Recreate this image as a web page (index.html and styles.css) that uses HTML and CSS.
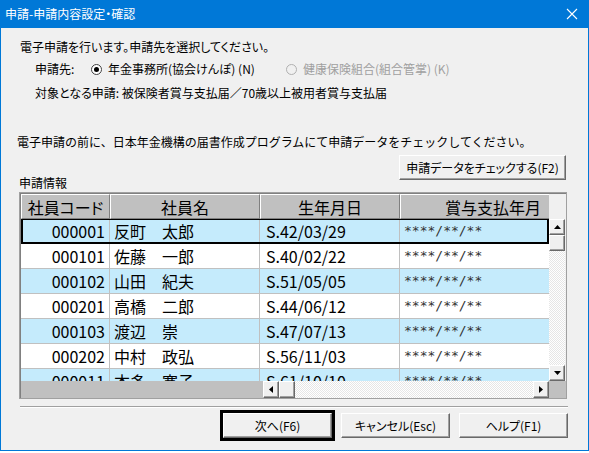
FILE: index.html
```html
<!DOCTYPE html>
<html lang="ja">

<head>
    <meta charset="UTF-8">
    <meta name="viewport" content="width=device-width, initial-scale=1.0">
    <title>申請-申請内容設定・確認</title>
    <link rel="stylesheet" href="styles.css">
</head>

<body>
    <div class="window">
        <div class="titlebar">
            <span class="title">申請-申請内容設定・確認</span>
            <svg class="close" width="12" height="12" viewBox="0 0 12 12">
                <path d="M1 1 L11 11 M11 1 L1 11" stroke="#fff" stroke-width="1.1" />
            </svg>
        </div>

        <div class="content">
            <p class="intro">電子申請を行います。申請先を選択してください。</p>

            <div class="dest-row">
                <span class="dest-label">申請先:</span>
                <label class="radio-opt first">
                    <span class="radio checked"></span>
                    <span>年金事務所(協会けんぽ) (N)</span>
                </label>
                <label class="radio-opt disabled">
                    <span class="radio"></span>
                    <span>健康保険組合(組合管掌) (K)</span>
                </label>
            </div>

            <p class="target">対象となる申請: 被保険者賞与支払届／70歳以上被用者賞与支払届</p>

            <p class="notice">電子申請の前に、日本年金機構の届書作成プログラムにて申請データをチェックしてください。</p>

            <div class="section-head">
                <span class="section-label">申請情報</span>
                <button class="btn check-btn">申請データをチェックする(F2)</button>
            </div>

            <div class="grid-frame">
                <div class="grid-inner">
                    <div class="grid-top">
                        <div class="hdr">
                            <div class="cell c1">社員コード</div>
                            <div class="cell c2">社員名</div>
                            <div class="cell c3">生年月日</div>
                            <div class="cell c4">賞与支払年月</div>
                        </div>
                        <div class="hdr-gap"></div>
                    </div>

                    <div class="grid-mid">
                        <div class="rows">
                            <div class="row blue selected">
                                <div class="cell c1">000001</div>
                                <div class="cell c2">反町　太郎</div>
                                <div class="cell c3">S.42/03/29</div>
                                <div class="cell c4 mask">****/**/**</div>
                            </div>
                            <div class="row">
                                <div class="cell c1">000101</div>
                                <div class="cell c2">佐藤　一郎</div>
                                <div class="cell c3">S.40/02/22</div>
                                <div class="cell c4 mask">****/**/**</div>
                            </div>
                            <div class="row blue">
                                <div class="cell c1">000102</div>
                                <div class="cell c2">山田　紀夫</div>
                                <div class="cell c3">S.51/05/05</div>
                                <div class="cell c4 mask">****/**/**</div>
                            </div>
                            <div class="row">
                                <div class="cell c1">000201</div>
                                <div class="cell c2">高橋　二郎</div>
                                <div class="cell c3">S.44/06/12</div>
                                <div class="cell c4 mask">****/**/**</div>
                            </div>
                            <div class="row blue">
                                <div class="cell c1">000103</div>
                                <div class="cell c2">渡辺　崇</div>
                                <div class="cell c3">S.47/07/13</div>
                                <div class="cell c4 mask">****/**/**</div>
                            </div>
                            <div class="row">
                                <div class="cell c1">000202</div>
                                <div class="cell c2">中村　政弘</div>
                                <div class="cell c3">S.56/11/03</div>
                                <div class="cell c4 mask">****/**/**</div>
                            </div>
                            <div class="row blue">
                                <div class="cell c1">000011</div>
                                <div class="cell c2">本多　寛子</div>
                                <div class="cell c3">S.61/10/10</div>
                                <div class="cell c4 mask">****/**/**</div>
                            </div>
                        </div>

                        <div class="vscroll">
                            <div class="sb-btn">
                                <svg width="7" height="4" viewBox="0 0 7 4"><polygon points="3.5,0 7,4 0,4" fill="#000" /></svg>
                            </div>
                            <div class="sb-thumb"></div>
                            <div class="sb-track"></div>
                            <div class="sb-btn">
                                <svg width="7" height="4" viewBox="0 0 7 4"><polygon points="0,0 7,0 3.5,4" fill="#000" /></svg>
                            </div>
                        </div>
                    </div>

                    <div class="grid-bottom">
                        <div class="frozen-fill"></div>
                        <div class="hscroll">
                            <div class="sb-btn">
                                <svg width="4" height="7" viewBox="0 0 4 7"><polygon points="0,3.5 4,0 4,7" fill="#000" /></svg>
                            </div>
                            <div class="sb-thumb"></div>
                            <div class="sb-track"></div>
                            <div class="sb-btn">
                                <svg width="4" height="7" viewBox="0 0 4 7"><polygon points="0,0 4,3.5 0,7" fill="#000" /></svg>
                            </div>
                        </div>
                        <div class="corner"></div>
                    </div>
                </div>
            </div>

            <div class="separator"></div>

            <div class="actions">
                <button class="btn default">次へ(F6)</button>
                <button class="btn">キャンセル(Esc)</button>
                <button class="btn">ヘルプ(F1)</button>
            </div>
        </div>
    </div>
</body>

</html>
```

FILE: styles.css
```css
body {
    margin: 0;
    background-color: #fff;
    font-family: "Noto Sans CJK JP", "Noto Sans", sans-serif;
    font-size: 12px;
    font-feature-settings: "palt";
    color: #000;
}

p {
    margin: 0;
}

.window {
    width: 589px;
    height: 451px;
    box-sizing: border-box;
    border: 1px solid #0078d7;
    border-top: none;
    background-color: #f0f0f0;
}

/* title bar */
.titlebar {
    height: 28px;
    margin: 0 -1px;
    padding: 0 11px 0 5px;
    background-color: #0078d7;
    display: flex;
    align-items: center;
    justify-content: space-between;
}

.title {
    color: #fff;
    font-size: 12px;
    line-height: 16px;
}

/* dialog body */
.content {
    padding: 0 20px 0 16px;
}

.intro {
    margin: 11px 0 0 3px;
    line-height: 16px;
}

.dest-row {
    margin: 6px 0 0 18px;
    display: flex;
    align-items: center;
    line-height: 16px;
}

.dest-label {
    width: 56px;
}

.radio-opt {
    display: flex;
    align-items: center;
    gap: 6px;
}

.radio-opt.first {
    width: 195px;
}

.radio-opt.disabled {
    color: #a0a0a0;
}

.radio {
    width: 11px;
    height: 11px;
    box-sizing: border-box;
    border-radius: 50%;
    border: 1px solid #404040;
    background-color: #fff;
    display: flex;
    align-items: center;
    justify-content: center;
}

.radio.checked::after {
    content: "";
    width: 5px;
    height: 5px;
    border-radius: 50%;
    background-color: #000;
}

.radio-opt.disabled .radio {
    border-color: #b0b0b0;
    background-color: #f0f0f0;
}

.target {
    margin: 8px 0 0 18px;
    line-height: 16px;
}

.notice {
    margin-top: 33px;
    line-height: 16px;
    font-feature-settings: normal;
}

.section-head {
    margin-top: 5px;
    display: flex;
    justify-content: space-between;
}

.section-label {
    margin: 20px 0 0 2px;
    line-height: 16px;
}

.btn {
    height: 25px;
    padding: 0;
    font-family: inherit;
    font-size: 12px;
    font-feature-settings: "palt";
    color: #000;
    background-color: #f0f0f0;
    border: 1px solid;
    border-color: #fff #696969 #696969 #fff;
    box-shadow: inset -1px -1px 0 #a0a0a0;
}

.check-btn {
    width: 167px;
    margin-right: 2px;
}

/* data grid */
.grid-frame {
    margin: 1px 0 0 2px;
    width: 548px;
    border: 1px solid #a0a0a0;
    box-sizing: border-box;
}

.grid-inner {
    border-top: 1px solid #808080;
    border-left: 1px solid #808080;
}

.grid-top {
    display: flex;
    height: 25px;
}

.hdr {
    width: 528px;
    display: flex;
    overflow: hidden;
    background-color: #c0c0c0;
}

.hdr-gap {
    flex: 1;
    background-color: #f0f0f0;
}

.cell {
    flex: none;
    box-sizing: border-box;
    font-size: 16px;
    line-height: 24px;
    white-space: nowrap;
    overflow: hidden;
}

.c1 {
    width: 89px;
    text-align: right;
    padding-right: 4px;
}

.c2 {
    width: 150px;
    padding-left: 4px;
}

.c3 {
    width: 140px;
    padding-left: 6px;
}

.c4 {
    width: 187px;
    padding-left: 4px;
}

.hdr .cell {
    height: 25px;
    text-align: center;
    padding: 0;
    border-top: 1px solid #fff;
    border-left: 1px solid #fff;
    border-right: 1px solid #808080;
    border-bottom: 1px solid #808080;
}

.hdr .c4 {
    width: 149px;
    text-align: right;
    padding-right: 8px;
    border-right: none;
}

.grid-mid {
    display: flex;
    height: 162px;
}

.rows {
    width: 528px;
    overflow: hidden;
}

.row {
    position: relative;
    height: 25px;
    display: flex;
    box-sizing: border-box;
    border-bottom: 1px solid #c0c0c0;
    background-color: #fff;
}

.row.blue {
    background-color: #c5ebfc;
}

.row .cell {
    border-right: 1px solid #c0c0c0;
}

.row.selected::after {
    content: "";
    position: absolute;
    inset: -1px 0 -1px 0;
    border: 2px solid #000;
}

.mask {
    color: #333;
    font-family: "DejaVu Sans Mono", monospace;
    font-size: 13px;
}

/* scrollbars */
.vscroll {
    width: 16px;
    display: flex;
    flex-direction: column;
}

.sb-btn {
    width: 16px;
    height: 16px;
    flex: none;
    box-sizing: border-box;
    background-color: #f0f0f0;
    border: 1px solid;
    border-color: #fff #696969 #696969 #fff;
    box-shadow: inset -1px -1px 0 #a0a0a0;
    display: flex;
    align-items: center;
    justify-content: center;
}

.sb-thumb {
    width: 16px;
    height: 16px;
    flex: none;
    box-sizing: border-box;
    background-color: #f0f0f0;
    border: 1px solid;
    border-color: #fff #696969 #696969 #fff;
    box-shadow: inset -1px -1px 0 #a0a0a0;
}

.sb-track {
    flex: 1;
    background: repeating-conic-gradient(#fff 0 25%, #e6e6e6 0 50%) 0 0 / 2px 2px;
}

.grid-bottom {
    display: flex;
    height: 17px;
}

.frozen-fill {
    width: 242px;
    background-color: #c0c0c0;
}

.hscroll {
    width: 286px;
    display: flex;
}

.hscroll .sb-btn,
.hscroll .sb-thumb {
    height: 17px;
}

.corner {
    flex: 1;
    background-color: #c0c0c0;
}

/* bottom */
.separator {
    margin: 7px 0 0 3px;
    border-top: 1px solid #a0a0a0;
    border-bottom: 1px solid #fff;
}

.actions {
    margin-top: 5px;
    display: flex;
    justify-content: flex-end;
    gap: 9px;
}

.actions .btn {
    width: 109px;
}

.btn.default {
    outline: 3px solid #000;
}
```
